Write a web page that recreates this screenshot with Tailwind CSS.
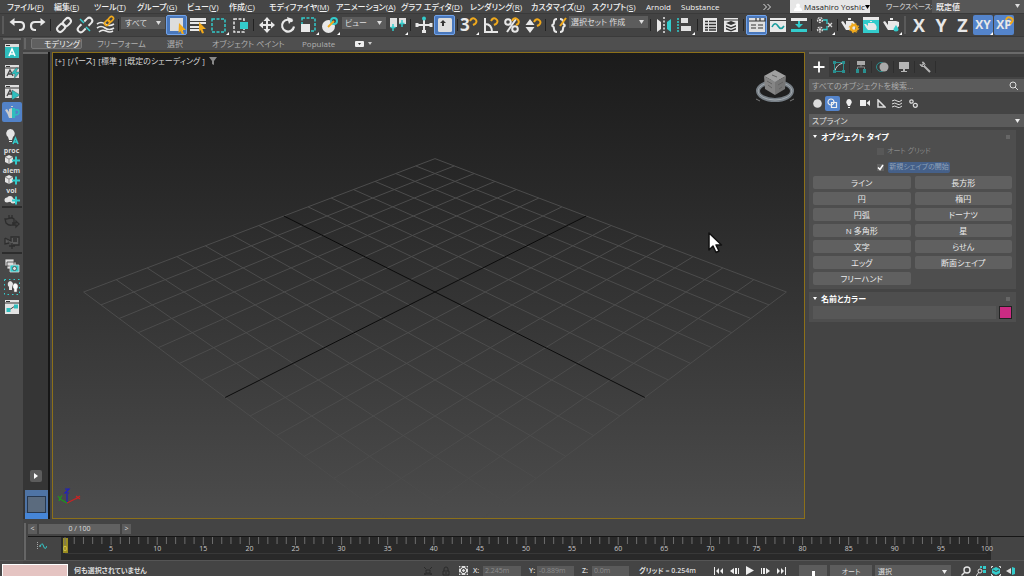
<!DOCTYPE html>
<html lang="ja">
<head>
  <meta charset="UTF-8" />
  <meta name="viewport" content="width=device-width, initial-scale=1.0"/>
  <title>3ds Max</title>
  <script src="https://cdn.jsdelivr.net/npm/@tailwindcss/browser@4"></script>
</head>
<body class="bg-[#444444] text-[#dedede] text-[8px] leading-[12px] font-['Open_Sans','Noto_Sans_CJK_JP',sans-serif] [font-feature-settings:'palt'] h-screen flex flex-col overflow-hidden">

  <!-- Menu bar -->
  <header class="flex h-[13px] shrink-0 items-center bg-[#464646] pl-[7px] font-medium whitespace-nowrap text-[#f2f2f2]">
    <nav class="flex flex-1">
      <a href="#" class="w-[47px]">ファイル(<u>F</u>)</a>
      <a href="#" class="w-[40px]">編集(<u>E</u>)</a>
      <a href="#" class="w-[43px]">ツール(<u>T</u>)</a>
      <a href="#" class="w-[50px]">グループ(<u>G</u>)</a>
      <a href="#" class="w-[42px]">ビュー(<u>V</u>)</a>
      <a href="#" class="w-[40px]">作成(<u>C</u>)</a>
      <a href="#" class="w-[67px]">モディファイヤ(<u>M</u>)</a>
      <a href="#" class="w-[65px]">アニメーション(<u>A</u>)</a>
      <a href="#" class="w-[69px]">グラフ エディタ(<u>D</u>)</a>
      <a href="#" class="w-[61px]">レンダリング(<u>R</u>)</a>
      <a href="#" class="w-[61px]">カスタマイズ(<u>U</u>)</a>
      <a href="#" class="w-[54px]">スクリプト(<u>S</u>)</a>
      <a href="#" class="w-[35px]">Arnold</a>
      <a href="#">Substance</a>
    </nav>
    <button class="mr-[19px] w-2" aria-label="More"><svg class="size-2" viewBox="0 0 8 8" fill="none" stroke="#ddd"><path d="M0.500 1l3 3-3 3M4.500 1l3 3-3 3"/></svg></button>
    <button class="mr-[16px] flex h-[13px] w-[80px] shrink-0 items-center bg-[#e6e6e6] pl-1 text-[#1d1d1d]">
      <svg class="mr-[2px] size-2 shrink-0" viewBox="0 0 8 8" fill="#fff"><circle cx="4" cy="2.500" r="2"/><path d="M0 8q0-4 4-4t4 4z"/></svg>
      Masahiro Yoshic<svg class="h-1 w-[5px] shrink-0" viewBox="0 0 5 4"><path d="M0 0h5L2.500 4z"/></svg>
    </button>
    <label for="workspace" class="w-[46px] shrink-0 text-[7px] text-[#c4c4c4]">ワークスペース:</label>
    <div class="relative h-[13px] w-[92px] bg-[#575757]">
      <select id="workspace" class="block size-full appearance-none pl-1 outline-none"><option>既定値</option></select>
      <svg class="pointer-events-none absolute top-1 right-1 h-1 w-[5px]" viewBox="0 0 5 4" fill="#ddd"><path d="M0 0h5L2.500 4z"/></svg>
    </div>
  </header>

  <!-- Main toolbar -->
  <div class="flex h-[24px] shrink-0 items-center border-y border-[#3a3a3a] bg-[#434343]">
    <div class="mr-[2px] ml-[2px] h-[18px] w-[2px] bg-[#5a5a5a]"></div>
    <button class="flex w-[21px] justify-center" aria-label="Undo"><svg class="size-5" viewBox="0 0 20 20" fill="none" stroke="#e8e8e8" stroke-width="2.200"><path d="M6 7h7q4 0 4 4t-4 4h-1"/><path d="M2.500 7l5-4v8z" fill="#e8e8e8" stroke="none"/></svg></button>
    <button class="flex w-[21px] justify-center" aria-label="Redo"><svg class="size-5" viewBox="0 0 20 20" fill="none" stroke="#e8e8e8" stroke-width="2.200"><path d="M14 7H7q-4 0-4 4t4 4h1"/><path d="M17.500 7l-5-4v8z" fill="#e8e8e8" stroke="none"/></svg></button>
    <div class="flex w-[5px] justify-center"><div class="h-3 w-px bg-[#222]"></div></div>
    <button class="flex w-[21px] justify-center" aria-label="Link"><svg class="size-5" viewBox="0 0 20 20" fill="none" stroke="#e8e8e8" stroke-width="2"><g transform="rotate(-45 10 10)"><rect x="1.500" y="7" width="9" height="6" rx="3"/><rect x="9.500" y="7" width="9" height="6" rx="3"/></g></svg></button>
    <button class="flex w-[21px] justify-center" aria-label="Unlink"><svg class="size-5" viewBox="0 0 20 20" fill="none" stroke="#e8e8e8" stroke-width="2"><g transform="rotate(-45 10 10)"><path d="M8 7H4a3 3 0 0 0 0 6h4M12 7h4a3 3 0 0 1 0 6h-4"/></g><path d="M5 4l4 4M11 12l4 4" stroke="#3cc" stroke-width="1.500"/></svg></button>
    <button class="flex w-[21px] justify-center" aria-label="Bind to space warp"><svg class="size-5" viewBox="0 0 20 20" fill="none" stroke="#e8e8e8" stroke-width="1.600"><path d="M1 9q4-3 8 0t9 0M1 13q4-3 8 0t9 0M3 17q3-3 7-1t7 0"/><g stroke="#f0a91c" transform="rotate(-45 13 6)"><rect x="7.500" y="4" width="6" height="4" rx="2"/><rect x="12.500" y="4" width="6" height="4" rx="2"/></g></svg></button>
    <div class="flex w-[5px] justify-center"><div class="h-3 w-px bg-[#222]"></div></div>
    <div class="relative mb-[5px] h-3 w-[44px] bg-[#5c5c5c]">
      <select aria-label="選択フィルタ" class="block size-full appearance-none pl-1 outline-none"><option>すべて</option></select>
      <svg class="pointer-events-none absolute top-1 right-1 h-1 w-[5px]" viewBox="0 0 5 4" fill="#ddd"><path d="M0 0h5L2.500 4z"/></svg>
    </div>
    <div class="w-px"></div>
    <button class="flex w-[21px] justify-center rounded-xs border border-[#71a3ea] bg-[#4a78bc]" aria-label="Select object"><svg class="size-[18px]" viewBox="1 1 18 18"><path fill="#ddd" d="M3 3h13v13H3z"/><path fill="#f0a91c" d="M12 8l7 7h-3.500l1.500 4-2 .5-1.500-3.500-2 2z"/></svg></button>
    <button class="flex w-[21px] justify-center" aria-label="Select by name"><svg class="size-5" viewBox="0 0 20 20"><path fill="#e8e8e8" d="M2 3h16v3H2zM2 7h16v2H2zM2 11h9v2H2zM2 14h9v2H2z"/><path fill="#f0a91c" d="M11 7l7 7h-3.500l1.500 4-2 .5-1.500-3.500-1.500 2z"/></svg></button>
    <button class="flex w-[21px] justify-center" aria-label="Rectangular selection"><svg class="size-5" viewBox="0 0 20 20"><path fill="none" stroke="#3cc" stroke-width="1.500" stroke-dasharray="3 1.500" d="M3 4h13v13H3z"/><path fill="#fff" d="M20 17v3h-3z"/></svg></button>
    <button class="flex w-[21px] justify-center" aria-label="Window crossing"><svg class="size-5" viewBox="0 0 20 20"><path fill="none" stroke="#e8e8e8" stroke-width="1.500" stroke-dasharray="3 1.500" d="M4 4h10v13H4z"/><path fill="#3cc" d="M10 7h8v7h-8z"/></svg></button>
    <div class="flex w-[6px] justify-center"><div class="h-3 w-px bg-[#222]"></div></div>
    <button class="flex w-[21px] justify-center" aria-label="Move"><svg class="size-5" viewBox="0 0 20 20" fill="#e8e8e8"><path d="M9 5h2v4h4v2h-4v4H9v-4H5V9h4z"/><path d="M10 2l3.500 4h-7zM10 18l3.500-4h-7zM2 10l4-3.500v7zM18 10l-4-3.500v7z"/></svg></button>
    <button class="flex w-[21px] justify-center" aria-label="Rotate"><svg class="size-5" viewBox="0 0 20 20" fill="none" stroke="#e8e8e8" stroke-width="2.200"><path d="M14.500 6.500a6 6 0 1 0 1.500 5"/><path d="M9 2l6 2-4 5z" fill="#e8e8e8" stroke="none"/></svg></button>
    <button class="flex w-[21px] justify-center" aria-label="Scale"><svg class="size-5" viewBox="0 0 20 20"><path fill="none" stroke="#3cc" stroke-width="1.500" stroke-dasharray="3 1.500" d="M3 3h13v13H3z"/><path fill="#e8e8e8" d="M2 9h9v8H2z"/><path fill="#fff" d="M20 17v3h-3z"/></svg></button>
    <button class="flex w-[21px] justify-center" aria-label="Place"><svg class="size-5" viewBox="0 0 20 20"><circle cx="8.500" cy="11.500" r="6.500" fill="#e8e8e8"/><circle cx="14" cy="6" r="3" fill="none" stroke="#3cc" stroke-width="2"/><path d="M8 12l6-6" stroke="#f0a91c" stroke-width="1.800"/><path fill="#fff" d="M20 17v3h-3z"/></svg></button>
    <div class="w-[2px]"></div>
    <div class="relative mb-[5px] h-3 w-[44px] bg-[#5c5c5c]">
      <select aria-label="参照座標系" class="block size-full appearance-none pl-[3px] outline-none"><option>ビュー</option></select>
      <svg class="pointer-events-none absolute top-1 right-1 h-1 w-[5px]" viewBox="0 0 5 4" fill="#ddd"><path d="M0 0h5L2.500 4z"/></svg>
    </div>
    <div class="w-px"></div>
    <button class="flex w-[21px] justify-center" aria-label="Pivot center"><svg class="size-5" viewBox="0 0 20 20"><path fill="#e0e0e0" d="M2 3h7v9H2zM11 3h7v6h-7z"/><path stroke="#3cc" stroke-width="1.500" d="M5 9v7M2.500 12.500h5M14 5v7M11.500 8.500h5"/><path fill="#fff" d="M20 17v3h-3z"/></svg></button>
    <div class="flex w-[5px] justify-center"><div class="h-3 w-px bg-[#222]"></div></div>
    <button class="flex w-[21px] justify-center" aria-label="Manipulate"><svg class="size-5" viewBox="0 0 20 20" fill="#e8e8e8"><path d="M9 4h2v5h6v2h-6v6H9v-6H3V9h6z"/><circle cx="10" cy="3.500" r="2" fill="#3cc"/><path d="M1.500 8h3v4h-3zM15.500 8h3v4h-3zM8 15h4v3H8z"/></svg></button>
    <button class="flex w-[21px] justify-center rounded-xs border border-[#71a3ea] bg-[#4a78bc]" aria-label="Keyboard shortcut override"><svg class="size-[18px]" viewBox="1 1 18 18"><rect x="3" y="3" width="14" height="14" rx="1.500" fill="#ddd"/><path fill="#333" d="M8 5l3 3H9v3H7V8H5z"/></svg></button>
    <div class="flex w-[4px] justify-center"><div class="h-3 w-px bg-[#222]"></div></div>
    <button class="relative flex w-[21px] pl-px text-[17px] leading-5 font-bold text-[#e8e8e8]" aria-label="3D snap">3<svg class="absolute top-0 left-0 size-5" viewBox="0 0 20 20"><path fill="none" stroke="#f0a91c" stroke-width="2" d="M11 6q2-4 5-2t0 5l-2 1"/><path fill="#fff" d="M20 17v3h-3z"/></svg></button>
    <button class="flex w-[21px] justify-center" aria-label="Angle snap"><svg class="size-5" viewBox="0 0 20 20" fill="none" stroke="#e8e8e8" stroke-width="2"><path d="M4 3v14h13M4 9q7 0 7 8"/><path stroke="#f0a91c" d="M10 6q2-4 5-2t0 5l-2 1"/></svg></button>
    <button class="flex w-[21px] justify-center" aria-label="Percent snap"><svg class="size-5" viewBox="0 0 20 20" fill="none" stroke="#e8e8e8" stroke-width="2"><circle cx="6" cy="7" r="2.800"/><circle cx="13" cy="14" r="2.800"/><path d="M14 4L5 17"/><path stroke="#f0a91c" d="M10 6q2-4 5-2t1 5l-2 1"/></svg></button>
    <button class="flex w-[21px] justify-center" aria-label="Spinner snap"><svg class="size-5" viewBox="0 0 20 20"><path fill="#e8e8e8" d="M7 4l4.500 6h-9zM7 18l4.500-6h-9z"/><path fill="none" stroke="#f0a91c" stroke-width="2" d="M11 7q2-4 5-2t0 5l-2 1"/></svg></button>
    <div class="flex w-[5px] justify-center"><div class="h-3 w-px bg-[#222]"></div></div>
    <button class="flex w-[21px] justify-center" aria-label="Named selection sets"><svg class="size-5" viewBox="0 0 20 20" fill="none" stroke="#e8e8e8" stroke-width="2"><path d="M8 4q-3 0-3 3t-2.500 3.500Q5 11 5 14t3 3M11 4q3 0 3 3t2.500 3.500Q14 11 14 14t-3 3"/><path stroke="#f0a91c" d="M17 3l-6 8"/></svg></button>
    <div class="relative mb-[7px] h-3 w-[79px] bg-[#5c5c5c]">
      <select aria-label="選択セット" class="block size-full appearance-none pl-[2px] outline-none"><option>選択セット 作成</option></select>
      <svg class="pointer-events-none absolute top-1 right-1 h-1 w-[5px]" viewBox="0 0 5 4" fill="#ddd"><path d="M0 0h5L2.500 4z"/></svg>
    </div>
    <div class="flex w-[5px] justify-center"><div class="h-3 w-px bg-[#222]"></div></div>
    <button class="flex w-[21px] justify-center" aria-label="Mirror"><svg class="size-5" viewBox="0 0 20 20"><path fill="#e8e8e8" d="M3 4l4 3v7l-4 3z"/><path fill="#3cc" d="M17 4l-4 3v7l4 3z"/><path stroke="#e8e8e8" stroke-width="1.500" stroke-dasharray="2 1.500" d="M10 2v16"/></svg></button>
    <button class="flex w-[21px] justify-center" aria-label="Align"><svg class="size-5" viewBox="0 0 20 20"><path stroke="#3cc" stroke-width="1.500" stroke-dasharray="2 1" d="M3 3v14"/><path fill="#e0e0e0" d="M6 3h7v5H6zM6 11h10v5H6z"/><path fill="#fff" d="M20 17v3h-3z"/></svg></button>
    <div class="flex w-[4px] justify-center"><div class="h-3 w-px bg-[#222]"></div></div>
    <button class="flex w-[21px] justify-center" aria-label="Scene explorer"><svg class="size-5" viewBox="0 0 20 20"><path fill="#e8e8e8" d="M3 3h14v14H3z"/><path stroke="#333" stroke-width="1.500" d="M5 6.500h3M9 6.500h7M5 9.500h3M9 9.500h7M5 12.500h3M9 12.500h7M5 15h3M9 15h7"/></svg></button>
    <button class="flex w-[21px] justify-center" aria-label="Layer explorer"><svg class="size-5" viewBox="0 0 20 20"><path fill="#e8e8e8" d="M3 3h14v14H3z"/><path fill="#333" d="M3 4.500h14v1H3zM10 6l5 2-5 2-5-2zM5 10l5 2 5-2v1.500l-5 2-5-2zM5 13l5 2 5-2v1.500l-5 2-5-2z"/></svg></button>
    <div class="flex w-[5px] justify-center"><div class="h-3 w-px bg-[#222]"></div></div>
    <button class="flex w-[21px] justify-center rounded-xs border border-[#71a3ea] bg-[#4a78bc]" aria-label="Toggle ribbon"><svg class="size-[18px]" viewBox="1 1 18 18"><path fill="#e0e0e0" d="M2 3h16v14H2z"/><path fill="none" stroke="#333" stroke-width="1.200" d="M2 6h7V3M9 6h9V3M13 3v3M4 10h5M4 13h5M11 10h5M11 13h5"/></svg></button>
    <button class="flex w-[21px] justify-center" aria-label="Curve editor"><svg class="size-5" viewBox="0 0 20 20"><path fill="#e8e8e8" d="M2 3h16v14H2z"/><path stroke="#444" d="M2 5.500h16"/><path fill="none" stroke="#1a9c9c" stroke-width="1.600" d="M4 12q3-6 6-1t6 0"/></svg></button>
    <button class="flex w-[21px] justify-center" aria-label="Dope sheet"><svg class="size-5" viewBox="0 0 20 20"><path fill="#e8e8e8" d="M2 3h16v3H2z"/><path fill="#3cc" d="M2 14h16v3H2zM9 6h2v3h3l-4 4-4-4h3z"/></svg></button>
    <div class="flex w-[5px] justify-center"><div class="h-3 w-px bg-[#222]"></div></div>
    <button class="flex w-[21px] justify-center" aria-label="Material editor"><svg class="size-5" viewBox="0 0 20 20" fill="none" stroke="#d8d8d8" stroke-width="1.300"><circle cx="5" cy="5" r="2.500" stroke-dasharray="2 1"/><circle cx="5" cy="14.500" r="2.500" stroke-dasharray="2 1"/><circle cx="5" cy="5" r=".7"/><circle cx="5" cy="14.500" r=".7"/><path stroke="#3cc" d="M8 5h4v4M8 14.500h4V11"/><path d="M13 8l4 4M17 8l-4 4"/><path fill="#fff" stroke="none" d="M20 17v3h-3z"/></svg></button>
    <div class="flex w-[4px] justify-center"><div class="h-3 w-px bg-[#222]"></div></div>
    <button class="flex w-[21px] justify-center" aria-label="Render setup"><svg class="size-5" viewBox="0 0 20 20"><path fill="#e8e8e8" d="M6 6h7q4 3 2 9H6Q4 12 1 7l2-1 3 4zM8 3h3v2H8z"/><circle cx="14" cy="13" r="3" fill="none" stroke="#f0a91c" stroke-width="2.500"/><circle cx="14" cy="13" r="4.800" fill="none" stroke="#f0a91c" stroke-dasharray="1.800 2"/></svg></button>
    <button class="flex w-[21px] justify-center" aria-label="Rendered frame window"><svg class="size-5" viewBox="0 0 20 20"><path fill="#3cc" d="M2 3h16v15H2z"/><path fill="#e8e8e8" d="M2 2h16v3H2zM7 8h6q4 3 2 7H7Q5 13 3 9h2l2 2zM9 6h2v1H9z"/></svg></button>
    <button class="flex w-[21px] justify-center" aria-label="Render production"><svg class="size-5" viewBox="0 0 20 20"><path fill="#e8e8e8" d="M6 6h8l3 1v4l-3 4H6Q4 12 1 7l2-1 3 4zM8 3h3v2H8z"/><path fill="#3cc" d="M14 10l2.500 4a2.500 2.500 0 1 1-5 0z"/><path fill="#fff" d="M20 17v3h-3z"/></svg></button>
    <div class="flex w-[6px] justify-center"><div class="h-[18px] w-[2px] bg-[#5a5a5a]"></div></div>
    <div class="flex text-[18px] leading-5 font-bold text-[#e8e8e8]">
      <button class="w-[22px]">X</button>
      <button class="w-[22px]">Y</button>
      <button class="w-[21px]">Z</button>
      <button class="relative mr-px h-[20px] w-[20px] rounded-xs bg-[#5484cb] text-[12px]">XY<svg class="absolute right-0 bottom-0 size-[3px]" viewBox="0 0 3 3" fill="#fff"><path d="M3 0v3H0z"/></svg></button>
      <button class="relative h-[20px] w-[20px] rounded-xs bg-[#5484cb] text-[12px]">XP<svg class="absolute top-px right-0 size-[9px]" viewBox="0 0 9 9" fill="none" stroke="#f0a91c" stroke-width="2"><path d="M1 4q1-4 5-2t-1 6"/></svg></button>
    </div>
  </div>

  <div class="flex min-h-0 flex-1">
    <!-- Left tool rail -->
    <aside class="flex w-[23px] shrink-0 flex-col items-center bg-[#484848]">
      <div class="mt-px mb-px h-[2px] w-[18px] bg-[#686868]"></div>
      <button class="flex h-[20px] items-center" aria-label="Arnold render view"><svg class="size-4" viewBox="0 0 16 16"><path fill="#ddd" d="M1 1h14v3H1z"/><path stroke="#333" d="M2 2.500h4"/><path fill="#2fbdbd" d="M1 4h14v11H1z"/><path fill="none" stroke="#fff" stroke-width="1.600" d="M5 13l3-7 3 7M6 11h4"/></svg></button>
      <button class="flex h-[21px] items-center" aria-label="Light mixer"><svg class="size-4" viewBox="0 0 16 16"><path fill="#ddd" d="M1 1h14v13H1z"/><path stroke="#333" d="M2 2.500h4M1 4h14"/><path fill="none" stroke="#444" stroke-width="1.300" d="M3 12l3-6 3 6M4 10h4"/><path fill="#2fbdbd" stroke="#444" stroke-width=".4" d="M12 4l-5 6h4l-1 5 6-7h-4l2-4z"/></svg></button>
      <button class="flex h-[20px] items-center" aria-label="Open render view"><svg class="size-4" viewBox="0 0 16 16"><path fill="#ddd" d="M1 1h14v13H1z"/><path stroke="#333" d="M2 2.500h4M1 4h14"/><path fill="none" stroke="#444" stroke-width="1.300" d="M3 12l3-6 3 6M4 10h4"/><path fill="#2fbdbd" stroke="#444" stroke-width=".4" d="M8 6l8 5-8 5z"/></svg></button>
      <button class="flex h-[20px] w-[20px] items-center justify-center rounded-xs bg-[#5282c8]" aria-label="Render teapot"><svg class="size-4" viewBox="0 0 16 16"><path fill="#ccc" d="M8 4v10H5Q4 10 1 6l2-1 2 3V5zM7 2h2v1H7z"/><path fill="#2fbdbd" d="M8 4h3q1 4 0 10H8z"/><path fill="none" stroke="#2fbdbd" stroke-width="1.500" d="M11 6q4-1 4 2t-4 3"/></svg></button>
      <button class="mt-[5px] flex h-[20px] items-center" aria-label="Light"><svg class="size-4" viewBox="0 0 16 16"><path fill="#e4e4e4" d="M6 0a4.500 4.500 0 0 1 3 8l-1 3H5L4 8a4.500 4.500 0 0 1 2-8zM5 12h3v1H5z"/><path fill="none" stroke="#3cc" stroke-width="1.500" d="M9 15l2.500-6 2.500 6M10 13h3"/></svg></button>
      <button class="flex h-[20px] flex-col items-center text-[7px] leading-[8px] font-bold">proc<svg class="h-[10px] w-4" viewBox="0 0 16 10"><path fill="#e4e4e4" d="M5 0l4 2v5L5 9 1 7V2z"/><path fill="none" stroke="#666" stroke-width=".7" d="M1 2l4 2 4-2M5 4v5"/><path stroke="#3cc" stroke-width="2" d="M8 5.500h8M12 1.500v8"/></svg></button>
      <button class="flex h-[20px] flex-col items-center text-[7px] leading-[8px] font-bold">alem<svg class="h-[10px] w-4" viewBox="0 0 16 10"><path fill="#e4e4e4" d="M5 0l4 2v5L5 9 1 7V2z"/><path fill="none" stroke="#666" stroke-width=".7" d="M1 2l4 2 4-2M5 4v5"/><path stroke="#3cc" stroke-width="2" d="M8 5.500h8M12 1.500v8"/></svg></button>
      <button class="flex h-[19px] flex-col items-center text-[7px] leading-[8px] font-bold">vol<svg class="h-[10px] w-4" viewBox="0 0 16 10" fill="#e4e4e4"><circle cx="3" cy="5" r="2.500"/><circle cx="6" cy="4" r="3"/><circle cx="9" cy="6" r="2.500"/><path stroke="#3cc" stroke-width="2" d="M8 5.500h8M12 1.500v8"/></svg></button>
      <div class="mb-[4px] h-[2px] w-[20px] bg-[#2c2c2c]"></div>
      <button class="flex h-[20px] items-center" aria-label="Scene export"><svg class="size-4" viewBox="0 0 16 16" fill="none" stroke="#2d2d2d" stroke-width="1.300"><path d="M5 5V1M8 5V1M3 5q5-2 7 0v5q-4 3-8-1l-1-4zM8 9h4V7l3 3-3 3v-2H8"/></svg></button>
      <button class="flex h-[20px] items-center" aria-label="Convert"><svg class="size-4" viewBox="0 0 16 16" fill="#5a5a5a" stroke="#2d2d2d" stroke-width="1.300"><path d="M1 4l6 3V3h8v8H9M1 4v6l4-1M9 5h4M9 7h4M8 9v6M5 12h6"/></svg></button>
      <div class="mb-[2px] h-[2px] w-[20px] bg-[#2c2c2c]"></div>
      <button class="flex h-[20px] items-center" aria-label="Render layers"><svg class="size-4" viewBox="0 0 16 16" fill="#ddd" stroke="#444" stroke-width=".8"><path d="M1 1h9v7H1zM3 4h9v7H3z"/><path fill="#3cc" stroke="#ddd" d="M6 7h9v7H6z"/><circle cx="10.500" cy="10.500" r="2"/></svg></button>
      <button class="flex h-[21px] items-center" aria-label="Light lister"><svg class="size-4" viewBox="0 0 16 16"><path fill="none" stroke="#3cc" stroke-dasharray="1.500 3" d="M.5.500h15v15H.5z"/><path fill="#e4e4e4" d="M6 2a3.500 3.500 0 0 1 2 6v3H5V8A3.500 3.500 0 0 1 6 2z"/><path fill="#fff" stroke="#666" stroke-width=".5" d="M11 4a3.500 3.500 0 0 1 2 6v3h-3v-3a3.500 3.500 0 0 1 1-6z"/></svg></button>
      <button class="flex h-[20px] items-center" aria-label="Node view"><svg class="size-4" viewBox="0 0 16 16"><path fill="#e4e4e4" d="M1 1h14v14H1z"/><path stroke="#333" d="M2 2.500h4M1 4h14"/><path stroke="#444" d="M5 11l6-4"/><path fill="#2fbdbd" d="M2.500 9h4v4h-4zM10 5.500h4v4h-4z"/></svg></button>
    </aside>

    <div class="flex min-w-0 flex-1 flex-col">
      <!-- Ribbon -->
      <div class="flex h-[13px] shrink-0 items-center bg-[#4f4f4f] whitespace-nowrap text-[#b0b0b0]">
        <div class="mr-[5px] ml-[1px] h-[11px] w-[2px] bg-[#666]"></div>
        <button class="mr-[15px] h-[11px] w-[51px] rounded-xs border border-[#777] bg-[#606060] pl-[12px] text-left leading-[9px] text-[#f0f0f0]">モデリング</button>
        <button class="w-[70px] text-left">フリーフォーム</button>
        <button class="w-[45px] text-left">選択</button>
        <button class="w-[90px] text-left">オブジェクト ペイント</button>
        <button class="w-[53px] text-left">Populate</button>
        <button class="flex items-center gap-1" aria-label="Ribbon options"><svg class="h-[6px] w-[9px]" viewBox="0 0 9 6"><rect width="9" height="6" rx="1" fill="#eee"/><path fill="#333" d="M3 2h3L4.500 4z"/></svg><svg class="h-[3px] w-1" viewBox="0 0 4 3" fill="#ccc"><path d="M0 0h4L2 3z"/></svg></button>
      </div>

      <div class="flex min-h-0 flex-1 pt-[2px]">
        <!-- Viewport layout tabs -->
        <div class="flex w-[27px] shrink-0 flex-col items-center border-r-2 border-[#161616] bg-[#353535]">
          <div class="h-[2px] w-full bg-[#666]"></div>
          <button class="mt-auto mb-[8px] flex size-3 items-center justify-center rounded-xs bg-[#5c5c5c]" aria-label="Expand"><svg class="h-[6px] w-1" viewBox="0 0 4 6" fill="#fff"><path d="M0 0l4 3-4 3z"/></svg></button>
          <button class="h-[29px] w-[23px] self-end border-b-[6px] border-[#4686d8] bg-[#4f74a5] px-[2px] pt-[5px]" aria-label="Layout"><span class="block h-[17px] border border-[#27384f] bg-[#5b6b7e]"></span></button>
        </div>

        <!-- Perspective viewport -->
        <main class="relative ml-[2px] min-w-0 flex-1 border border-[#8c7019] bg-linear-to-b from-[#1b1b1b] to-[#4c4c4c]">
          <svg id="grid" class="absolute inset-0 size-full" viewBox="53 53 751 465" preserveAspectRatio="xMidYMid slice"></svg>
          <div class="absolute top-[2px] left-[2px] flex gap-[3px] text-[#d6d6d6]">
            <span>[+]</span><span>[パース]</span><span>[標準 ]</span><span>[既定のシェーディング ]</span>
            <svg class="mt-[2px] ml-px size-2" viewBox="0 0 8 8" fill="#888"><path d="M0 0h8L5 4v4L3 7V4z"/></svg>
          </div>
          <!-- View cube -->
          <svg class="absolute top-[14px] right-[9px] h-[38px] w-[40px]" viewBox="0 0 40 38">
            <ellipse cx="20" cy="24" rx="17" ry="9" fill="none" stroke="#777f86" stroke-width="4"/>
            <ellipse cx="20" cy="24" rx="17" ry="9" fill="none" stroke="#a3a9ae" stroke-width="1"/>
            <path fill="#a0a0a0" d="M20 3l11 6-11 6-11-6z"/>
            <path fill="#858585" d="M9 9l11 6v13L10 22z"/>
            <path fill="#757575" d="M31 9l-11 6v13l10-6z"/>
            <path stroke="#626262" fill="none" d="M12 14l5 3M13 18l4 3M23 18l5-3M24 22l3-2M17 8l5 2"/>
            <path stroke="#777" d="M1 32l4 2M35 34l4-2"/>
          </svg>
          <!-- Axis tripod -->
          <svg class="absolute bottom-[12px] left-[3px] h-[18px] w-[26px]" viewBox="0 0 26 18" fill="none" stroke-width="1.200">
            <path stroke="#1d1dc4" d="M11 15V6M9 1h4L9 5h4"/>
            <path stroke="#c22" d="M11 15l10-5M20 8l4 3M24 8l-4 3"/>
            <path stroke="#1c991c" d="M11 15l-7-4M2 8l2 2.500L6 7.500M4 10l-1 3"/>
          </svg>
          <!-- Mouse pointer -->
          <svg class="absolute top-[178px] right-[81px] h-[24px] w-[16px]" viewBox="0 0 16 24"><path fill="#fff" stroke="#111" stroke-width="1.500" stroke-linejoin="round" d="M2 2v17l4-4 3 6.500 3-1.500-3-6h5.500z"/></svg>
        </main>

        <!-- Command panel -->
        <aside class="ml-[4px] flex w-[215px] shrink-0 flex-col">
          <div class="mb-[3px] h-[2px] shrink-0 bg-[#6a6a6a]"></div>
          <div class="flex h-[20px] shrink-0 items-center bg-[#393939]">
            <button class="flex h-full w-[20px] items-center justify-center bg-[#444]" aria-label="Create"><svg class="size-3" viewBox="0 0 12 12" stroke="#fff" stroke-width="1.800"><path d="M6 .5v11M.5 6h11"/></svg></button>
            <button class="flex w-[21px] justify-center border-r border-[#2e2e2e]" aria-label="Modify"><svg class="size-3" viewBox="0 0 12 12" fill="none"><path stroke="#2a9090" d="M1.500 1.500h9v9h-9z"/><path stroke="#ccc" d="M2 10q1-6 8-8"/><path fill="#2a9090" d="M0 0h3v3H0zM9 0h3v3H9zM0 9h3v3H0zM9 9h3v3H9z"/></svg></button>
            <button class="flex w-[22px] justify-center border-r border-[#2e2e2e]" aria-label="Hierarchy"><svg class="size-3" viewBox="0 0 12 12"><path fill="#aaa" d="M2 0h8v4H2z"/><path fill="none" stroke="#888" d="M6 4v2M2.500 8V6h7v2"/><path fill="#2a9090" d="M1 8h3v4H1zM8 8h3v4H8z"/></svg></button>
            <button class="flex w-[22px] justify-center border-r border-[#2e2e2e]" aria-label="Motion"><svg class="h-3 w-[13px]" viewBox="0 0 13 12"><circle cx="5" cy="6" r="4.500" fill="none" stroke="#2a9090"/><circle cx="8" cy="6" r="4.500" fill="#aaa"/></svg></button>
            <button class="flex w-[21px] justify-center border-r border-[#2e2e2e]" aria-label="Display"><svg class="size-3" viewBox="0 0 12 12" fill="#b5b5b5"><path d="M1 1h10v7H1zM5 8h2v2H5zM3 10h6v1H3z"/></svg></button>
            <button class="flex w-[21px] justify-center border-r border-[#2e2e2e]" aria-label="Utilities"><svg class="size-3" viewBox="0 0 12 12" fill="none" stroke="#b5b5b5" stroke-width="2"><path d="M5 5l6 6"/><path d="M1 3.500l2 1L4.500 3 3.500 1" stroke-width="1.300"/><path d="M1 3.500q1 3 4 2 2-2 0-4l-1.500-.5" stroke-width="1"/></svg></button>
          </div>
          <div class="mt-[2px] flex h-[13px] shrink-0 items-center bg-[#5b5b5b] pr-[6px] pl-[3px]">
            <input type="text" aria-label="検索" placeholder="すべてのオブジェクトを検索..." class="min-w-0 flex-1 outline-none placeholder:text-[#aaa]" />
            <svg class="size-[9px]" viewBox="0 0 9 9" fill="none" stroke="#ddd"><circle cx="4" cy="4" r="3"/><path d="M6 6l3 3"/></svg>
          </div>
          <div class="mt-[3px] flex h-[16px] shrink-0 items-center">
            <button class="flex w-[16px] justify-center" aria-label="Geometry"><svg class="size-[9px]" viewBox="0 0 9 9" fill="#ddd"><circle cx="4.500" cy="4.500" r="4.300"/></svg></button>
            <button class="flex size-[15px] items-center justify-center rounded-xs bg-[#5484cb]" aria-label="Shapes"><svg class="size-[11px]" viewBox="0 0 11 11" fill="none" stroke="#eee" stroke-width="1.200"><circle cx="4" cy="4" r="3"/><path d="M4.500 4.500h5v5h-5z"/></svg></button>
            <button class="flex w-[17px] justify-center" aria-label="Lights"><svg class="h-[9px] w-2" viewBox="0 0 8 9" fill="#eee"><path d="M4 0a3 3 0 0 1 2 5L5 7H3L2 5a3 3 0 0 1 2-5zM3 8h2v1H3z"/></svg></button>
            <button class="flex w-[16px] justify-center" aria-label="Cameras"><svg class="h-2 w-[10px]" viewBox="0 0 10 8" fill="#eee"><path d="M0 1h6v6H0zM6.500 4L10 1v6z"/></svg></button>
            <button class="flex w-[16px] justify-center" aria-label="Helpers"><svg class="size-[9px]" viewBox="0 0 9 9"><path fill="none" stroke="#ddd" stroke-width="1.500" d="M1 1v7h7z"/></svg></button>
            <button class="flex w-[16px] justify-center" aria-label="Space warps"><svg class="h-[9px] w-[10px]" viewBox="0 0 10 9" fill="none" stroke="#ddd"><path d="M0 2q3-2 5 0t5-1M0 5q3-2 5 0t5-1M0 8q3-2 5 0t5-1"/></svg></button>
            <button class="flex w-[16px] justify-center" aria-label="Systems"><svg class="size-[9px]" viewBox="0 0 9 9" fill="none" stroke="#ddd" stroke-width="1.200"><circle cx="2.500" cy="2.500" r="1.700"/><circle cx="6.300" cy="6.300" r="2"/></svg></button>
          </div>
          <div class="relative mt-[3px] h-[13px] shrink-0 bg-[#5b5b5b]">
            <select aria-label="カテゴリ" class="block size-full appearance-none pl-[3px] outline-none"><option>スプライン</option></select>
            <svg class="pointer-events-none absolute top-[5px] right-[4px] h-1 w-[5px]" viewBox="0 0 5 4" fill="#eee"><path d="M0 0h5L2.500 4z"/></svg>
          </div>

          <section class="mt-[3px] mr-2 bg-[#4e4e4e] px-1 pb-1">
            <h2 class="flex h-[13px] items-center gap-1 font-bold text-white"><svg class="h-[3px] w-1" viewBox="0 0 4 3" fill="#fff"><path d="M0 0h4L2 3z"/></svg>オブジェクト タイプ<span class="mr-[2px] ml-auto size-[4px] bg-[#666]"></span></h2>
            <div class="ml-[64px] text-[7px]">
              <label class="flex h-4 items-center gap-[3px] text-[#888]"><input type="checkbox" disabled class="size-[7px] appearance-none bg-[#585858]" />オート グリッド</label>
              <label class="flex h-4 items-center gap-1">
                <span class="relative size-[7px]">
                  <input type="checkbox" checked class="block size-full appearance-none bg-[#626262]" />
                  <svg class="pointer-events-none absolute inset-0 size-full" viewBox="0 0 7 7" fill="none" stroke="#fff" stroke-width="1.500"><path d="M1 3.500l2 2L6 1"/></svg>
                </span>
                <span class="flex h-[11px] w-[62px] items-center justify-center rounded-xs bg-[#456089] whitespace-nowrap text-[#8fa0b8]">新規シェイプの開始</span>
              </label>
            </div>
            <div class="mt-px grid grid-cols-2 gap-x-1 gap-y-[3px] text-[#ececec] leading-[13px]">
              <button class="h-[13px] rounded-xs bg-[#606060]">ライン</button>
              <button class="h-[13px] rounded-xs bg-[#606060]">長方形</button>
              <button class="h-[13px] rounded-xs bg-[#606060]">円</button>
              <button class="h-[13px] rounded-xs bg-[#606060]">楕円</button>
              <button class="h-[13px] rounded-xs bg-[#606060]">円弧</button>
              <button class="h-[13px] rounded-xs bg-[#606060]">ドーナツ</button>
              <button class="h-[13px] rounded-xs bg-[#606060]">N 多角形</button>
              <button class="h-[13px] rounded-xs bg-[#606060]">星</button>
              <button class="h-[13px] rounded-xs bg-[#606060]">文字</button>
              <button class="h-[13px] rounded-xs bg-[#606060]">らせん</button>
              <button class="h-[13px] rounded-xs bg-[#606060]">エッグ</button>
              <button class="h-[13px] rounded-xs bg-[#606060]">断面シェイプ</button>
              <button class="h-[13px] rounded-xs bg-[#606060]">フリーハンド</button>
            </div>
          </section>
          <section class="mt-[3px] mr-2 bg-[#4e4e4e] px-1 pb-[3px]">
            <h2 class="flex h-[13px] items-center gap-1 font-bold text-white"><svg class="h-[3px] w-1" viewBox="0 0 4 3" fill="#fff"><path d="M0 0h4L2 3z"/></svg>名前とカラー<span class="mr-[2px] ml-auto size-[4px] bg-[#666]"></span></h2>
            <div class="mt-px flex gap-[3px]">
              <input type="text" aria-label="名前" class="h-[13px] min-w-0 flex-1 bg-[#575757] outline-none" />
              <button class="size-[13px] border border-[#222] bg-[#cc2b83]" aria-label="オブジェクト カラー"></button>
            </div>
          </section>
        </aside>
      </div>

      <!-- Time slider -->
      <div class="mt-[3px] flex h-[54px] shrink-0">
        <div class="mt-px ml-px h-[38px] w-[2px] bg-[#666]"></div>
        <div class="flex min-w-0 flex-1 flex-col pl-[2px]">
          <div class="flex h-[14px] shrink-0 items-center gap-[2px] text-[7px]">
            <button class="h-[10px] w-[9px] bg-[#5c5c5c] leading-[10px]">&lt;</button>
            <button class="h-[10px] w-[81px] bg-[#616161] leading-[10px]">0 / 100</button>
            <button class="h-[10px] w-[9px] bg-[#5c5c5c] leading-[10px]">&gt;</button>
          </div>
          <div class="flex h-[24px] shrink-0 border-t border-[#161616]">
            <button class="flex w-[33px] justify-center pt-[5px] pr-[6px]" aria-label="Mini curve editor"><svg class="h-2 w-[11px]" viewBox="0 0 11 8" fill="none"><path stroke="#aaa" stroke-dasharray="1 1" d="M1.500 0v8M3 4h2"/><path stroke="#3cc" d="M4 5q2-6 3.500-1T11 4"/></svg></button>
            <div class="mr-[33px] flex-1 bg-[#292929] px-1">
              <svg id="timeline" class="h-[23px] w-full overflow-visible"></svg>
            </div>
          </div>
          <!-- Status bar -->
          <div class="-ml-[28px] flex h-[20px] shrink-0 items-center border-t border-[#555] pl-[2px] text-[7px] leading-[14px] font-semibold whitespace-nowrap">
            <div class="mt-[3px] mr-[6px] h-[17px] w-[66px] border border-white bg-[#e5c4c2]"></div>
            <span class="w-[349px]">何も選択されていません</span>
            <button class="w-[18px]" aria-label="Isolate"><svg class="size-[10px]" viewBox="0 0 10 10" fill="none" stroke="#2b2b2b"><path d="M1 1l2 2M9 1L7 3M1 8h8M3 4h4v3H3zM2 9V7M8 9V7"/></svg></button>
            <button class="w-[18px]" aria-label="Lock selection"><svg class="size-[10px]" viewBox="0 0 10 10" fill="none" stroke="#2b2b2b"><path d="M3 5V3q0-2 2-2t2 2v2M2 5h6v4H2zM5 6v2"/></svg></button>
            <button class="w-[14px]" aria-label="Absolute mode"><svg class="size-[9px]" viewBox="0 0 9 9"><path fill="#ddd" d="M0 0h9v9H0z"/><circle cx="4.500" cy="4.500" r="2" fill="none" stroke="#222"/><path stroke="#222" d="M1 3V1h2M6 1h2v2M8 6v2H6M3 8H1V6" fill="none"/></svg></button>
            <label for="cx" class="w-[10px]">X:</label><input id="cx" value="2.245m" class="mr-[8px] h-[10px] w-[38px] bg-[#5a5a5a] pl-[2px] font-normal text-[#8c8c8c]" />
            <label for="cy" class="w-[8px]">Y:</label><input id="cy" value="-0.889m" class="mr-[8px] h-[10px] w-[37px] bg-[#5a5a5a] pl-[2px] font-normal text-[#8c8c8c]" />
            <label for="cz" class="w-[10px]">Z:</label><input id="cz" value="0.0m" class="mr-[10px] h-[10px] w-[37px] bg-[#5a5a5a] pl-[2px] font-normal text-[#8c8c8c]" />
            <span>グリッド = 0.254m</span>
            <div class="mr-[13px] ml-auto flex gap-[5px]">
              <button aria-label="Go to start"><svg class="h-2 w-[10px]" viewBox="0 0 10 8" fill="#eee"><path d="M0 0h1v8H0zM5 1v6L2 4zM9 1v6L6 4z"/></svg></button>
              <button aria-label="Previous frame"><svg class="h-2 w-[11px]" viewBox="0 0 11 8" fill="#eee"><path d="M5 1v6L1 4zM6 1h2v6H6zM9 1h1v6H9z"/></svg></button>
              <button aria-label="Play"><svg class="h-[9px] w-[10px]" viewBox="0 0 10 9" fill="#eee"><path d="M1 0l8 4.500L1 9z"/></svg></button>
              <button aria-label="Next frame"><svg class="h-2 w-[11px]" viewBox="0 0 11 8" fill="#eee"><path d="M1 1h1v6H1zM3 1h2v6H3zM6 1v6l4-3z"/></svg></button>
              <button aria-label="Go to end"><svg class="h-2 w-[10px]" viewBox="0 0 10 8" fill="#eee"><path d="M9 0h1v8H9zM1 1v6l3-3zM5 1v6l3-3z"/></svg></button>
            </div>
            <button class="mt-[4px] mr-[3px] flex h-[16px] w-[28px] items-end justify-center bg-[#5c5c5c] pb-[2px]" aria-label="Set key"><span class="h-[8px] w-[3px] bg-white"></span></button>
            <button class="mt-[4px] mr-[3px] h-[16px] w-[42px] bg-[#5c5c5c] pb-[3px] font-normal">オート</button>
            <div class="relative mt-[4px] mr-[10px] h-[16px] w-[76px] bg-[#5c5c5c]">
              <select aria-label="キー フィルタ" class="block h-[13px] w-full appearance-none pl-[3px] font-normal outline-none"><option>選択</option></select>
              <svg class="pointer-events-none absolute top-[5px] right-[4px] h-1 w-[5px]" viewBox="0 0 5 4" fill="#eee"><path d="M0 0h5L2.500 4z"/></svg>
            </div>
            <div class="mr-[8px] flex gap-[5px]">
              <button aria-label="Zoom"><svg class="size-[10px]" viewBox="0 0 10 10" fill="none" stroke="#e4e4e4" stroke-width="1.400"><circle cx="6" cy="4" r="3"/><path d="M4 6L.5 9.500"/></svg></button>
              <button aria-label="Zoom all"><svg class="size-[10px]" viewBox="0 0 10 10" fill="none"><path fill="#3cc" d="M4 0h2v2H4zM7 0h3v3H7zM7 4h3v3H7z"/><circle cx="4" cy="5" r="2" stroke="#ddd"/><path stroke="#ddd" d="M3 6L0 10"/></svg></button>
              <button aria-label="Zoom extents"><svg class="size-[10px]" viewBox="0 0 10 10" fill="none"><path stroke="#ddd" d="M.5 2V.5H2M8 .5h1.500V2M9.500 8v1.500H8M2 9.500H.5V8"/><path fill="#3cc" d="M5 1l4 2v4L5 9 1 7V3z"/><path stroke="#444" d="M2 4l3 1.500L8 4"/></svg></button>
              <button aria-label="Orbit"><svg class="size-[10px]" viewBox="0 0 10 10"><path fill="#ddd" d="M0 5l5-3v6z"/><path fill="#3cc" d="M6 1l3 1v6L6 9z"/></svg></button>
            </div>
          </div>
        </div>
      </div>
    </div>
  </div>

  <script>
    const NS = 'http://www.w3.org/2000/svg';

    function add(parent, tag, attrs, text) {
      const el = document.createElementNS(NS, tag);
      for (const key in attrs) el.setAttribute(key, attrs[key]);
      if (text !== undefined) el.textContent = text;
      parent.appendChild(el);
    }

    // Home grid, 7 cells each way, seen in perspective
    const grid = document.getElementById('grid');
    function project(u, v) {
      const w = 1 + 0.0232 * (u + v);
      return [435 + 25.1 * (u - v) / w, 544 / w - 252];
    }
    function gridLine(a, b, color) {
      const [x1, y1] = project(a[0], a[1]);
      const [x2, y2] = project(b[0], b[1]);
      add(grid, 'line', { x1, y1, x2, y2, stroke: color, 'stroke-width': 1 });
    }
    for (let i = -7; i <= 7; i++) {
      if (i === 0) continue;
      gridLine([i, -7], [i, 7], '#4c4c4c');
      gridLine([-7, i], [7, i], '#4c4c4c');
    }
    gridLine([0, -7], [0, 7], '#0c0c0c');
    gridLine([-7, 0], [7, 0], '#0c0c0c');

    // Frame ticks and numbers
    const timeline = document.getElementById('timeline');
    add(timeline, 'rect', { x: -2, y: 1, width: 5, height: 15, fill: '#9a8d22' });
    for (let i = 0; i <= 100; i++) {
      const x = i + '%';
      add(timeline, 'line', { x1: x, x2: x, y1: 0, y2: i % 5 ? 7 : 8, stroke: '#6e6e6e' });
      if (i % 5 === 0) {
        add(timeline, 'text', { x, y: 14, 'text-anchor': 'middle', 'font-size': 7, fill: i ? '#c8c8c8' : '#e8dc6a' }, i);
      }
    }
    add(timeline, 'line', { x1: 0, x2: '100%', y1: 16.5, y2: 16.5, stroke: '#383838' });
  </script>
</body>
</html>
